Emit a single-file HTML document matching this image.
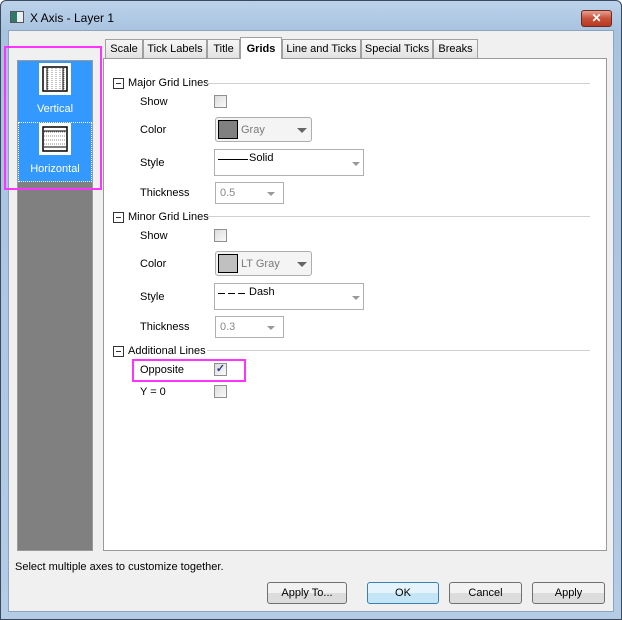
<!DOCTYPE html><html><head><style>
*{margin:0;padding:0;box-sizing:border-box}
body{width:622px;height:620px;position:relative;font-family:"Liberation Sans",sans-serif;font-size:11px;color:#000;background:#fff;overflow:hidden}
.a{position:absolute}
.win{left:0;top:0;width:622px;height:620px;border:1px solid #3a4a5c;border-radius:6px 6px 0 0;background:linear-gradient(#bcd2ea,#a8c3e0 30px,#b4cce6);}
.client{left:8px;top:30px;width:606px;height:582px;background:#f0f0f0;border:1px solid #8da4bf}
.tab{top:39px;height:19px;border:1px solid #a0a0a0;border-bottom:none;background:linear-gradient(#f6f6f6,#e2e2e2);text-align:center;line-height:18px;font-size:11px}
.lbl{left:140px;font-size:11px}
.cb{left:214px;width:13px;height:13px;border:1px solid #8e8f8f;background:linear-gradient(135deg,#dcdcdc,#fafafa)}
.hdr{left:113px;width:11px;height:11px;border:1px solid #333;background:#fff}
.hdr:after{content:"";position:absolute;left:2px;top:4px;width:5px;height:1px;background:#333}
.btn{top:582px;height:22px;border:1px solid #707070;border-radius:3px;background:linear-gradient(#f2f2f2 50%,#dcdcdc 50%);text-align:center;line-height:20px;font-size:11px}
.combo{border:1px solid #adadad;border-radius:3px;background:#f4f4f4}
.edit{border:1px solid #b0b0b0;background:#fff}
.arr{position:absolute;width:0;height:0;border-left:4px solid transparent;border-right:4px solid transparent;border-top:4px solid #999}
</style></head><body>
<div class="a win"></div>
<div class="a" style="left:10px;top:11px;width:14px;height:12px;border:1px solid #555;background:linear-gradient(90deg,#2d7a6a 50%,#e8eef2 50%)"></div>
<div class="a" style="left:30px;top:11px;font-size:12px">X Axis - Layer 1</div>
<div class="a" style="left:581px;top:10px;width:31px;height:17px;border:1px solid #6b2a20;border-radius:3px;background:linear-gradient(#e8a090,#c8503a 50%,#b83820);color:#fff;text-align:center;font-weight:bold;font-size:12px;line-height:15px">✕</div>
<div class="a client"></div>
<!-- left list -->
<div class="a" style="left:17px;top:60px;width:76px;height:491px;background:#808080;border:1px solid #9a9a9a"></div>
<div class="a" style="left:18px;top:61px;width:74px;height:61px;background:#3399ff"></div>
<div class="a" style="left:18px;top:122px;width:74px;height:60px;background:#3399ff;border:1px dotted #fff"></div>
<div class="a" style="left:39px;top:63px;width:32px;height:32px;background:#fff"><svg width="32" height="32"><rect x="4" y="4" width="24" height="24" fill="none" stroke="#000" stroke-width="1.5"/><g stroke="#888" stroke-dasharray="1 1"><path d="M9 5V27M13 5V27M17 5V27M21 5V27M25 5V27"/></g><path d="M8 5V27M24 5V27" stroke="#000"/></svg></div>
<div class="a" style="left:18px;top:103px;width:74px;text-align:center;color:#fff;font-size:11px">Vertical</div>
<div class="a" style="left:39px;top:123px;width:32px;height:32px;background:#fff"><svg width="32" height="32"><rect x="4" y="4" width="24" height="24" fill="none" stroke="#000" stroke-width="1.5"/><g stroke="#888" stroke-dasharray="1 1"><path d="M5 9H27M5 13H27M5 17H27M5 21H27"/></g><path d="M5 8H27M5 24H27" stroke="#000"/></svg></div>
<div class="a" style="left:18px;top:163px;width:74px;text-align:center;color:#fff;font-size:11px">Horizontal</div>
<div class="a" style="left:4px;top:46px;width:98px;height:144px;border:2px solid #ff33ff"></div>
<!-- tabs -->
<div class="a tab" style="left:105px;width:38px">Scale</div>
<div class="a tab" style="left:143px;width:64px">Tick Labels</div>
<div class="a tab" style="left:207px;width:33px">Title</div>
<div class="a tab" style="left:282px;width:79px">Line and Ticks</div>
<div class="a tab" style="left:361px;width:72px">Special Ticks</div>
<div class="a tab" style="left:433px;width:45px">Breaks</div>
<div class="a" style="left:103px;top:58px;width:504px;height:493px;background:#fff;border:1px solid #9a9a9a"></div>
<div class="a tab" style="left:240px;top:37px;width:42px;height:22px;background:#fff;font-weight:bold;line-height:22px;z-index:2">Grids</div>
<!-- sections -->
<div class="a hdr" style="top:78px"></div><div class="a" style="left:128px;top:77px">Major Grid Lines</div><div class="a" style="left:207px;top:83px;width:383px;height:1px;background:#d0d0d0"></div>
<div class="a lbl" style="top:96px">Show</div><div class="a cb" style="top:95px"></div>
<div class="a lbl" style="top:124px">Color</div>
<div class="a combo" style="left:215px;top:117px;width:97px;height:25px"><div class="a" style="left:2px;top:2px;width:20px;height:19px;background:#808080;border:1px solid #000"></div><div class="a" style="left:25px;top:6px;color:#7a7a7a">Gray</div><div class="arr" style="left:81px;top:10px;border-top-color:#666;border-left-width:5px;border-right-width:5px;border-top-width:5px"></div></div>
<div class="a lbl" style="top:157px">Style</div>
<div class="a edit" style="left:214px;top:149px;width:150px;height:27px"><div class="a" style="left:3px;top:9px;width:30px;height:1px;background:#000"></div><div class="a" style="left:34px;top:2px">Solid</div><div class="arr" style="left:137px;top:12px"></div></div>
<div class="a lbl" style="top:187px">Thickness</div>
<div class="a edit" style="left:215px;top:182px;width:69px;height:22px"><div class="a" style="left:4px;top:4px;color:#888">0.5</div><div class="arr" style="left:51px;top:9px"></div></div>

<div class="a hdr" style="top:212px"></div><div class="a" style="left:128px;top:211px">Minor Grid Lines</div><div class="a" style="left:207px;top:216px;width:383px;height:1px;background:#d0d0d0"></div>
<div class="a lbl" style="top:230px">Show</div><div class="a cb" style="top:229px"></div>
<div class="a lbl" style="top:258px">Color</div>
<div class="a combo" style="left:215px;top:251px;width:97px;height:25px"><div class="a" style="left:2px;top:2px;width:20px;height:19px;background:#c0c0c0;border:1px solid #000"></div><div class="a" style="left:25px;top:6px;color:#7a7a7a">LT Gray</div><div class="arr" style="left:81px;top:10px;border-top-color:#666;border-left-width:5px;border-right-width:5px;border-top-width:5px"></div></div>
<div class="a lbl" style="top:291px">Style</div>
<div class="a edit" style="left:214px;top:283px;width:150px;height:27px"><div class="a" style="left:3px;top:9px;width:30px;height:1px;background:repeating-linear-gradient(90deg,#000 0 7px,transparent 7px 10px)"></div><div class="a" style="left:34px;top:2px">Dash</div><div class="arr" style="left:137px;top:12px"></div></div>
<div class="a lbl" style="top:321px">Thickness</div>
<div class="a edit" style="left:215px;top:316px;width:69px;height:22px"><div class="a" style="left:4px;top:4px;color:#888">0.3</div><div class="arr" style="left:51px;top:9px"></div></div>

<div class="a hdr" style="top:346px"></div><div class="a" style="left:128px;top:345px">Additional Lines</div><div class="a" style="left:207px;top:350px;width:383px;height:1px;background:#d0d0d0"></div>
<div class="a lbl" style="top:364px">Opposite</div><div class="a cb" style="top:363px;color:#2a3a8a;font-size:11px;line-height:11px;text-align:center;font-weight:bold">✓</div>
<div class="a" style="left:132px;top:359px;width:114px;height:23px;border:2px solid #ff33ff"></div>
<div class="a lbl" style="top:386px">Y = 0</div><div class="a cb" style="top:385px"></div>
<!-- footer -->
<div class="a" style="left:15px;top:561px">Select multiple axes to customize together.</div>
<div class="a btn" style="left:267px;width:80px">Apply To...</div>
<div class="a btn" style="left:367px;width:72px;border-color:#3c7fb1;background:linear-gradient(#e5f4fc 50%,#c4e5f6 50%)">OK</div>
<div class="a btn" style="left:449px;width:73px">Cancel</div>
<div class="a btn" style="left:532px;width:73px">Apply</div>
</body></html>
